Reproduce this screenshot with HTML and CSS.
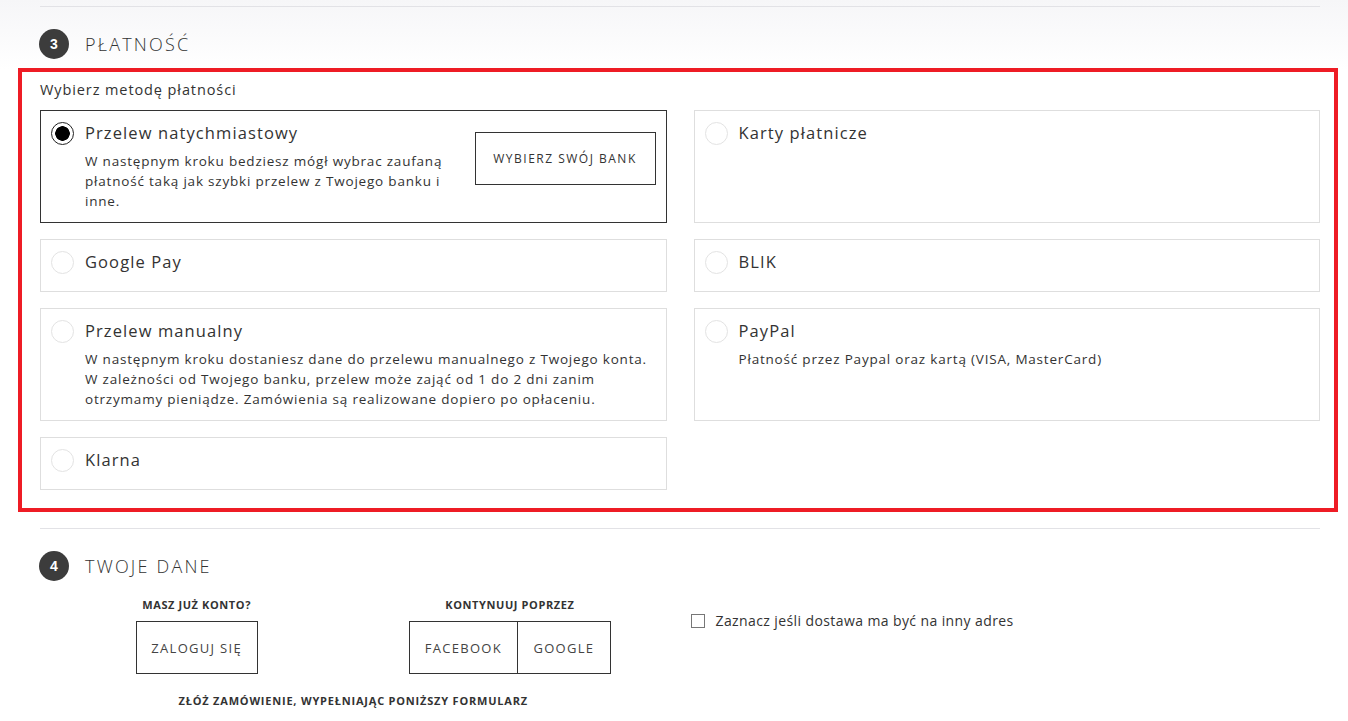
FILE: index.html
```html
<!DOCTYPE html>
<html lang="pl">
<head>
    <meta charset="UTF-8">
    <meta name="viewport" content="width=device-width, initial-scale=1.0">
    <title>Płatność</title>
    <link rel="stylesheet" href="styles.css">
</head>
<body>
    <div class="divider first"></div>

    <div class="step-head">
        <span class="step-num">3</span>
        <h2>PŁATNOŚĆ</h2>
    </div>

    <div class="highlight">
        <p class="choose">Wybierz metodę płatności</p>

        <div class="methods">
            <label class="method selected">
                <div class="method-body">
                    <div class="method-title">
                        <span class="radio checked"></span>
                        <span>Przelew natychmiastowy</span>
                    </div>
                    <p class="method-desc narrow">W następnym kroku bedziesz mógł wybrac zaufaną płatność taką jak szybki przelew z Twojego banku i inne.</p>
                </div>
                <span class="bank-btn">WYBIERZ SWÓJ BANK</span>
            </label>

            <label class="method">
                <div class="method-body">
                    <div class="method-title">
                        <span class="radio"></span>
                        <span>Karty płatnicze</span>
                    </div>
                </div>
            </label>

            <label class="method">
                <div class="method-body">
                    <div class="method-title">
                        <span class="radio"></span>
                        <span>Google Pay</span>
                    </div>
                </div>
            </label>

            <label class="method">
                <div class="method-body">
                    <div class="method-title">
                        <span class="radio"></span>
                        <span>BLIK</span>
                    </div>
                </div>
            </label>

            <label class="method">
                <div class="method-body">
                    <div class="method-title">
                        <span class="radio"></span>
                        <span>Przelew manualny</span>
                    </div>
                    <p class="method-desc">W następnym kroku dostaniesz dane do przelewu manualnego z Twojego konta. W zależności od Twojego banku, przelew może zająć od 1 do 2 dni zanim otrzymamy pieniądze. Zamówienia są realizowane dopiero po opłaceniu.</p>
                </div>
            </label>

            <label class="method">
                <div class="method-body">
                    <div class="method-title">
                        <span class="radio"></span>
                        <span>PayPal</span>
                    </div>
                    <p class="method-desc">Płatność przez Paypal oraz kartą (VISA, MasterCard)</p>
                </div>
            </label>

            <label class="method">
                <div class="method-body">
                    <div class="method-title">
                        <span class="radio"></span>
                        <span>Klarna</span>
                    </div>
                </div>
            </label>
        </div>
    </div>

    <div class="divider after-box"></div>

    <div class="step-head">
        <span class="step-num">4</span>
        <h2>TWOJE DANE</h2>
    </div>

    <div class="account">
        <div class="account-left">
            <div class="login-col">
                <h3>MASZ JUŻ KONTO?</h3>
                <div class="btn-group">
                    <span class="outline-btn login">ZALOGUJ SIĘ</span>
                </div>
            </div>
            <div class="login-col">
                <h3>KONTYNUUJ POPRZEZ</h3>
                <div class="btn-group">
                    <span class="outline-btn fb">FACEBOOK</span>
                    <span class="outline-btn gg">GOOGLE</span>
                </div>
            </div>
            <h3 class="form-title">ZŁÓŻ ZAMÓWIENIE, WYPEŁNIAJĄC PONIŻSZY FORMULARZ</h3>
        </div>
        <div class="account-right">
            <label class="check">
                <span class="checkbox"></span>
                Zaznacz jeśli dostawa ma być na inny adres
            </label>
        </div>
    </div>
</body>
</html>
```

FILE: styles.css
```css
body {
    margin: 0;
    font-family: "Open Sans", "Liberation Sans", sans-serif;
    color: #333;
    background: linear-gradient(#f6f6f8 0, #ffffff 70px) no-repeat;
}
.divider {
    margin: 0 28px 0 40px;
    border-top: 1px solid #e2e2e6;
}
.divider.first {
    margin-top: 6px;
}
.divider.after-box {
    margin-top: 16px;
}
.step-head {
    display: flex;
    align-items: center;
    gap: 16px;
    margin: 22px 28px 0 39px;
}
.step-num {
    width: 30px;
    height: 30px;
    border-radius: 50%;
    background: #3c3c3c;
    color: #fff;
    font-family: "Liberation Sans", sans-serif;
    font-weight: bold;
    font-size: 14px;
    display: flex;
    align-items: center;
    justify-content: center;
}
.step-head h2 {
    margin: 0;
    font-weight: 300;
    font-size: 18px;
    letter-spacing: 2.2px;
    color: #333;
}
.highlight {
    margin: 9px 10px 0 18px;
    border: 4px solid #ee1c25;
    padding: 8px 14px 18px 18px;
}
.choose {
    margin: 0 0 10px;
    font-size: 14.5px;
    line-height: 20px;
    letter-spacing: 0.9px;
    color: #333;
}
.methods {
    display: grid;
    grid-template-columns: 1fr 1fr;
    column-gap: 27px;
    row-gap: 16px;
}
.method {
    display: flex;
    justify-content: space-between;
    align-items: flex-start;
    border: 1px solid #dedede;
    padding: 10px 10px 11px 10px;
    background: #fff;
}
.method.selected {
    border-color: #333;
}
.method-title {
    display: flex;
    align-items: center;
    gap: 11px;
    font-size: 16.5px;
    line-height: 24px;
    color: #333;
    margin-bottom: 6px;
    letter-spacing: 1.1px;
}
.radio {
    width: 21px;
    height: 21px;
    border: 1px solid #e3e3e3;
    border-radius: 50%;
    flex-shrink: 0;
}
.radio.checked {
    border: 1px solid #222;
    background: radial-gradient(circle, #000 0 7px, #fff 7.5px);
}
.method-desc {
    margin: 0 0 0 34px;
    font-size: 13.5px;
    line-height: 20px;
    color: #333;
    letter-spacing: 0.8px;
}
.method-desc.narrow {
    max-width: 372px;
}
.bank-btn {
    margin-top: 11px;
    width: 179px;
    height: 51px;
    border: 1px solid #333;
    font-size: 12px;
    letter-spacing: 1.5px;
    color: #333;
    display: flex;
    align-items: center;
    justify-content: center;
    flex-shrink: 0;
}
.account {
    display: grid;
    grid-template-columns: 1fr 1fr;
    column-gap: 27px;
    margin: 0 28px 0 40px;
}
.account-left {
    display: grid;
    grid-template-columns: 1fr 1fr;
}
.login-col {
    display: flex;
    flex-direction: column;
    align-items: center;
    padding-top: 16px;
}
.account h3 {
    margin: 0;
    font-size: 11px;
    font-weight: bold;
    letter-spacing: 0.6px;
    color: #333;
    line-height: 16px;
}
.btn-group {
    display: flex;
    margin-top: 8px;
}
.outline-btn {
    height: 51px;
    border: 1px solid #333;
    display: flex;
    align-items: center;
    justify-content: center;
    font-size: 13px;
    letter-spacing: 1.3px;
    color: #444;
}
.outline-btn.login {
    width: 120px;
}
.outline-btn.fb {
    width: 107px;
}
.outline-btn.gg {
    width: 92px;
    border-left: none;
}
.account .form-title {
    grid-column: 1 / 3;
    text-align: center;
    margin-top: 19px;
    letter-spacing: 0.8px;
}
.account-right {
    padding-top: 30px;
    margin-left: -3px;
}
.check {
    display: flex;
    align-items: center;
    gap: 11px;
    font-size: 14px;
    letter-spacing: 0.4px;
    color: #333;
}
.checkbox {
    width: 12px;
    height: 12px;
    border: 1px solid #777;
}
```
